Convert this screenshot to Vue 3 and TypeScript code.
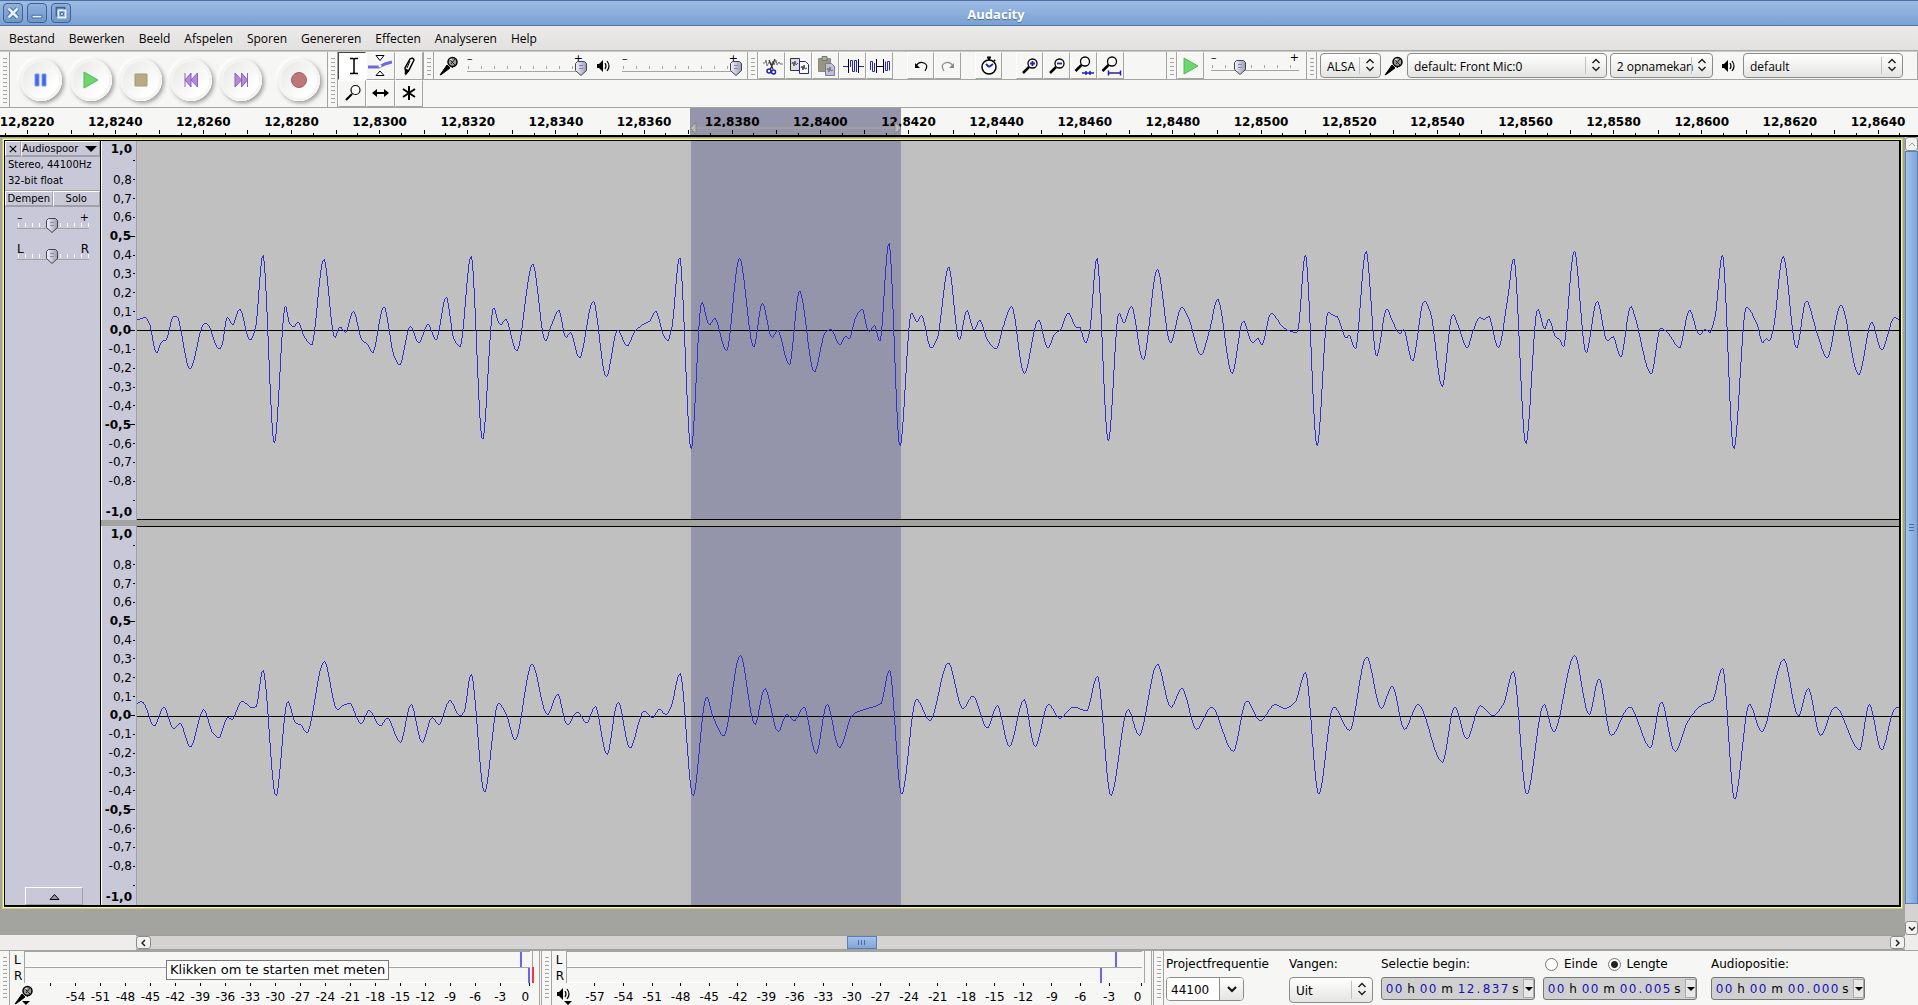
<script setup lang="ts">
import { ref } from 'vue'

interface Section { from: number; sx: number; sy: number; zero: number; points: string }
interface Point { x: number; y: number }

const menus = ['Bestand', 'Bewerken', 'Beeld', 'Afspelen', 'Sporen', 'Genereren', 'Effecten', 'Analyseren', 'Help']
const transport = [
  { id: 'pause', label: 'Pauze' },
  { id: 'play', label: 'Afspelen' },
  { id: 'stop', label: 'Stop' },
  { id: 'prev', label: 'Naar begin' },
  { id: 'next', label: 'Naar einde' },
  { id: 'record', label: 'Opnemen' },
]
const tools = [
  { id: 'ibeam', label: 'Selecteren' },
  { id: 'envelope', label: 'Omhullende' },
  { id: 'pencil', label: 'Tekenen' },
  { id: 'zoomtool', label: 'Zoomen' },
  { id: 'shift', label: 'Tijdverschuiving' },
  { id: 'multi', label: 'Multitool' },
]
const editGroups = [
  [{ id: 'cut', label: 'Knippen' }, { id: 'copy', label: 'Kopiëren' }, { id: 'paste', label: 'Plakken' }, { id: 'trim', label: 'Bijsnijden' }, { id: 'silence', label: 'Stilte' }],
  [{ id: 'undo', label: 'Ongedaan maken' }, { id: 'redo', label: 'Opnieuw' }],
  [{ id: 'timer', label: 'Synchronisatie' }],
  [{ id: 'zoomin', label: 'Inzoomen' }, { id: 'zoomout', label: 'Uitzoomen' }, { id: 'fitsel', label: 'Selectie passend' }, { id: 'fitproj', label: 'Project passend' }],
]

const times = Array.from({ length: 22 }, (_, i) => '12,8' + String(220 + i * 20))
const levels = Array.from({ length: 17 }, (_, i) => {
  const v = 8 - i
  return { text: (v < 0 ? '-' : '') + '0,' + Math.abs(v), bold: v % 5 === 0 }
})
const recordMarks = ['', ...Array.from({ length: 19 }, (_, i) => String(-54 + i * 3))]
const playMarks = Array.from({ length: 20 }, (_, i) => String(-57 + i * 3))

const timecodes = {
  begin: '00h00m12.837s',
  length: '00h00m00.005s',
  position: '00h00m00.000s',
}
function glyphClass(c: string): string {
  return c === '.' ? 'dot' : /[a-z]/.test(c) ? 'unit ' + c : ''
}
const mode = ref('lengte')
const rate = ref('44100')

const left: Section[] = [
  { from: 130, sx: 2.6133, sy: 3, zero: 301, points: '19,268 38,262 50,280 69,368 82,335 94,328 114,258 122,260 156,416 194,280 202,283 232,356 240,345 254,262 267,284 286,237 313,329 328,290 347,76 377,637 406,229 417,282 428,290 438,276 456,322 474,344 506,88 535,322 548,291 562,307 583,244 606,330 620,343 633,368 663,231 690,378 704,404 732,289 754,338 778,283 799,329 826,202 847,330 862,349 891,79 921,628 950,233 960,268 967,284 981,268 1010,362 1052,103 1085,332 1100,288 1120,241 1139,322 1150,307 1174,383 1210,213 1244,440 1274,300 1298,347 1320,302 1345,279 1356,274 1373,244 1395,318 1404,332 1416,290 1436,83 1466,656 1494,217 1513,284 1527,265' },
  { from: 680, sx: 2.529, sy: 3, zero: 301, points: '117,362 150,85 186,349 208,220 232,322 246,301 276,404 302,184 339,425 368,305 381,298 404,344 417,319 427,325 445,258 460,237 477,304 491,286 505,332 528,40 556,647 585,249 598,274 610,256 634,352 650,325 679,112 706,329 725,241 743,299 757,271 779,334 799,356 817,290 838,229 870,429 906,270 930,353 948,310 962,298 981,249 1002,291 1011,293 1025,338 1036,300 1054,85 1083,632 1110,249 1122,277 1141,229 1171,389 1207,118 1240,337 1268,232 1286,265 1317,374 1340,295 1359,208 1396,429 1424,273 1447,338 1461,325 1471,344 1494,250 1508,265 1523,291 1545,304 1557,307' },
  { from: 1280, sx: 2.4577, sy: 3, zero: 301, points: '44,297 62,76 91,647 118,247 130,256 140,260 162,323 169,316 185,356 211,64 237,377 262,237 275,270 293,310 303,299 325,392 354,213 370,250 398,468 424,253 440,295 459,353 475,300 490,262 500,268 512,259 536,352 560,200 574,85 604,640 633,238 650,295 660,268 678,322 687,328 696,350 723,64 752,367 779,213 804,331 818,320 837,380 862,229 872,260 912,431 935,295 955,313 981,353 1006,241 1030,314 1044,298 1055,307 1069,260 1087,76 1115,656 1146,232 1172,283 1186,337 1193,326 1202,332 1213,290 1236,79 1269,353 1293,213 1320,310 1344,383 1378,225 1422,433 1454,277 1478,359 1510,262 1521,268' },
]
const right: Section[] = [
  { from: 130, sx: 2.6133, sy: 3, zero: 256, points: '19,216 28,211 36,218 62,284 88,229 113,292 130,277 157,347 192,236 217,308 231,320 255,259 265,265 292,211 318,229 329,226 347,118 381,494 412,211 432,276 445,281 461,305 507,91 541,235 556,223 573,217 603,278 624,238 653,283 672,262 706,334 734,220 763,334 789,259 806,281 835,209 862,254 873,240 891,130 926,482 962,217 984,254 1006,326 1050,100 1090,250 1117,190 1142,281 1168,243 1193,275 1215,226 1246,370 1275,213 1306,350 1343,240 1365,259 1382,235 1399,250 1414,225 1437,127 1471,494 1506,199 1524,259 1551,314' },
  { from: 0, sx: 0.8175, sy: 0.8175, zero: 584.7, points: '605,535 617,591 625,562 636,597 643,583 649,588 657,577 667,615 676,575 686,610 697,583 706,579 720,574 727,547 737,648 749,571 760,588 775,541 787,578 795,568 807,594 815,576 825,609 837,571 846,609 857,575 866,586 877,577 888,580 897,552 908,649 922,579 931,600 946,542 957,577 966,562 978,595 990,577 1008,613 1019,572 1030,588 1042,575 1050,578 1059,572 1067,549 1078,648 1090,577 1103,596 1117,536 1129,578 1138,560 1148,595 1159,575 1179,622 1189,577 1199,603 1210,576 1220,584 1229,574 1237,548 1248,648 1262,575 1270,597 1287,535 1299,583 1307,554 1317,600 1332,577 1349,610 1358,573 1369,613 1380,588 1390,576 1400,571 1408,545 1418,652 1430,575 1440,597 1458,538 1470,584 1478,562 1488,600 1500,577 1520,612 1528,575 1538,612 1549,578 1552,577' },
]

// Monotone cubic through the samples, drawn as one vertical run per column
// so that steep flanks stay unbroken.
function trace(sections: Section[]): string {
  const p: Point[] = sections.flatMap(s =>
    s.points.split(' ').map(pair => {
      const [x, y] = pair.split(',').map(Number)
      return { x: s.from + x / s.sx - 137, y: 189 + (y - s.zero) / s.sy }
    }),
  )
  const slope = p.slice(1).map((b, i) => (b.y - p[i].y) / (b.x - p[i].x))
  const tangent = p.map((_, i) => {
    const a = slope[i - 1]
    const b = slope[i]
    if (a === undefined || b === undefined || a * b <= 0) return 0
    return (2 * a * b) / (a + b)
  })
  let k = 0
  const at = (x: number): number => {
    while (k < p.length - 2 && p[k + 1].x < x) k++
    const h = p[k + 1].x - p[k].x
    const t = Math.min(1, Math.max(0, (x - p[k].x) / h))
    const t2 = t * t
    const t3 = t2 * t
    return Math.round(
      (2 * t3 - 3 * t2 + 1) * p[k].y + (t3 - 2 * t2 + t) * h * tangent[k] +
      (3 * t2 - 2 * t3) * p[k + 1].y + (t3 - t2) * h * tangent[k + 1],
    )
  }
  let d = ''
  let prev = at(0)
  for (let x = 0; x < 1762; x++) {
    const next = at(x + 1)
    if (next > prev) d += `M${x}.5 ${prev}V${next}`
    else if (next < prev) d += `M${x}.5 ${next + 1}V${prev + 1}`
    else d += `M${x}.5 ${prev}v1`
    prev = next
  }
  return d
}
const channels = [trace(left), trace(right)]
</script>

<template>
  <div class="window">
    <svg class="defs" aria-hidden="true">
      <defs>
        <linearGradient id="thumb-fill" x1="0" x2="1"><stop offset="0" stop-color="#f4f4fc" /><stop offset="1" stop-color="#9a9ab8" /></linearGradient>
        <symbol id="mic" viewBox="0 0 20 20">
          <path d="M1 19L8 9l3 3L3 18z" fill="#000" stroke="#000" /><circle cx="13.500" cy="6" r="4.500" fill="#999" stroke="#000" stroke-width="1.500" /><path d="M9 8l5 4M11 4l5 5M12 8l4-5" stroke="#222" fill="none" /><path d="M11 4l2-1" stroke="#fff" />
        </symbol>
        <symbol id="speaker" viewBox="0 0 16 16">
          <path d="M1 6h2l4-4v12L3 10H1z" fill="#000" /><path d="M9 5q2 3 0 6M11 3q4 5 0 10" stroke="#000" stroke-width="1.200" fill="none" />
        </symbol>
        <symbol id="thumb" viewBox="0 0 12 15">
          <path d="M2.500.5h7l2 2v7L6 14.500.5 9.500v-7z" fill="url(#thumb-fill)" stroke="#444" /><path d="M4 4.500h4M4 7.500h4" stroke="#8888a8" />
        </symbol>
        <symbol id="updown" viewBox="0 0 10 14"><path d="M1.500 5L5 1.500 8.500 5M1.500 9L5 12.500 8.500 9" fill="none" stroke="#222" stroke-width="1.500" /></symbol>
        <symbol id="pause" viewBox="0 0 24 24"><path d="M6 6h4v12H6zM13 6h4v12h-4z" fill="#3f66e8" stroke="#7f9cf4" /></symbol>
        <symbol id="play" viewBox="0 0 24 24"><path d="M5 4v16l14-8z" fill="#6dd66d" stroke="#58b858" /></symbol>
        <symbol id="stop" viewBox="0 0 24 24"><path d="M6 6h12v12H6z" fill="#b9a985" stroke="#a79a78" /></symbol>
        <symbol id="prev" viewBox="0 0 24 24"><path d="M6 5v14M12 5v14l-6-7zM18.500 5v14L12 12z" fill="#b48ae0" stroke="#8a63b4" /></symbol>
        <symbol id="next" viewBox="0 0 24 24"><path d="M18.500 5v14M12.500 5v14l6-7zM6 5v14l6.500-7z" fill="#b48ae0" stroke="#8a63b4" /></symbol>
        <symbol id="record" viewBox="0 0 24 24"><circle cx="12" cy="12" r="7.500" fill="#bd7878" stroke="#a06060" /></symbol>
        <symbol id="ibeam" viewBox="0 0 24 24"><path d="M10 4.500h3l1 1 1-1h3M10 19.500h3l1-1 1 1h3M14 5v14" stroke="#000" stroke-width="1.500" fill="none" /></symbol>
        <symbol id="envelope" viewBox="0 0 24 24"><path d="M0 13h11l6-3 7-2" stroke="#6a6ae0" stroke-width="3" fill="none" /><path d="M8 1.500h8L12 6.500zM8 21.500h8L12 17z" fill="#fff" stroke="#000" /><circle cx="12" cy="12" r="1.500" fill="#fff" /></symbol>
        <symbol id="pencil" viewBox="0 0 24 24"><path d="M9 20l-1-6 5-9q3-2 4 1l-5 10z" fill="#fff" stroke="#000" stroke-width="1.500" /><path d="M8 20l1-5 3 2zM13 7l-3 7" fill="#000" stroke="#000" /></symbol>
        <symbol id="zoomtool" viewBox="0 0 24 24"><circle cx="15.500" cy="9" r="4.500" fill="#fff" stroke="#000" stroke-width="1.200" /><path d="M12 13l-6 6" stroke="#000" stroke-width="2.200" /></symbol>
        <symbol id="shift" viewBox="0 0 24 24"><path d="M5 12h15" stroke="#000" stroke-width="2" /><path d="M9 8l-5 4 5 4zM16 8l5 4-5 4z" /></symbol>
        <symbol id="multi" viewBox="0 0 24 24"><path d="M12 5v14M6 8l12 8M18 8L6 16" stroke="#000" stroke-width="2" /></symbol>
        <symbol id="cut" viewBox="0 0 24 24"><path d="M3 9h2l1-3 1 6 2-4 2 3 2-4 1 4 2-5 1 5 2-3 1 2h3" stroke="#777" fill="none" /><path d="M15 5l-5 11M9 6l4 9" stroke="#333" stroke-width="1.300" /><circle cx="9" cy="17" r="2" fill="none" stroke="#22a" stroke-width="1.500" /><circle cx="13.500" cy="18" r="2" fill="none" stroke="#22a" stroke-width="1.500" /></symbol>
        <symbol id="copy" viewBox="0 0 24 24"><path d="M3.500 4.500h9v12h-9z" fill="#ddd" stroke="#333" /><path d="M5 10l1-2 1 4 1-5 1 4 2-2" stroke="#555" fill="none" /><path d="M12.500 7.500h6l3 3v9h-9z" fill="#fff" stroke="#22a" /><path d="M14 14l1-2 1 4 1-5 1 4 2-1" stroke="#444" fill="none" /></symbol>
        <symbol id="paste" viewBox="0 0 24 24"><path d="M4.500 4.500h12v13h-12z" fill="#9c9678" stroke="#888" /><path d="M8 2.500h5v4H8z" fill="#aaa" stroke="#777" /><path d="M11.500 9.500h6l3 3v9h-9z" fill="#c0c0d4" stroke="#77a" /><path d="M13 16l1-2 1 4 1-5 1 4 2-1" stroke="#777" fill="none" /></symbol>
        <symbol id="trim" viewBox="0 0 24 24"><path d="M2 12.500h5M18 12.500h5" stroke="#22c" /><path d="M7.500 5v14M17.500 5v14" stroke="#000" /><path d="M9.500 13V6.500M9.500 6.500h2v11h2v-11h2V18" stroke="#22c" fill="none" /></symbol>
        <symbol id="silence" viewBox="0 0 24 24"><path d="M2.500 16V7.500h2v10h2V9M17.500 7.500v9h2v-9h2v9" stroke="#22c" fill="none" /><path d="M8.500 5v14M15.500 5v14M8 12.500h8" stroke="#000" /></symbol>
        <symbol id="undo" viewBox="0 0 24 24"><path d="M7 12q3-5 8-3t1 8" fill="none" stroke="#000" stroke-width="1.200" /><path d="M6 9v5h5z" /></symbol>
        <symbol id="redo" viewBox="0 0 24 24"><path d="M17 12q-3-5-8-3t-1 8" fill="none" stroke="#888" stroke-width="1.200" /><path d="M18 9v5h-5z" fill="#888" /></symbol>
        <symbol id="timer" viewBox="0 0 24 24"><circle cx="12" cy="13" r="7" fill="#fff" stroke="#000" stroke-width="1.500" /><path d="M10 3.500h4M12 3v3M17 6l1 1" stroke="#000" stroke-width="2" /><path d="M12 13L9 10M12 13l4-3" stroke="#22a" stroke-width="1.800" /></symbol>
        <symbol id="zoomin" viewBox="0 0 24 24"><circle cx="14.500" cy="9.500" r="4.500" fill="#fff" stroke="#000" stroke-width="1.300" /><path d="M11 13l-6 6" stroke="#000" stroke-width="2.500" /><path d="M12 9.500h5M14.500 7v5" stroke="#22a" stroke-width="1.800" /></symbol>
        <symbol id="zoomout" viewBox="0 0 24 24"><circle cx="14.500" cy="9.500" r="4.500" fill="#fff" stroke="#000" stroke-width="1.300" /><path d="M11 13l-6 6" stroke="#000" stroke-width="2.500" /><path d="M12 9.500h5" stroke="#22a" stroke-width="1.800" /></symbol>
        <symbol id="fitsel" viewBox="0 0 24 24"><circle cx="13" cy="7.500" r="4.500" fill="#fff" stroke="#000" stroke-width="1.300" /><path d="M9.500 11l-6 6" stroke="#000" stroke-width="2.500" /><path d="M10 19h12M14 17v4M18 17v4" stroke="#22a" stroke-width="1.500" /></symbol>
        <symbol id="fitproj" viewBox="0 0 24 24"><circle cx="13" cy="7.500" r="4.500" fill="#fff" stroke="#000" stroke-width="1.300" /><path d="M9.500 11l-6 6" stroke="#000" stroke-width="2.500" /><path d="M9.500 19h12M9.500 16.500v5M21.500 16.500v5" stroke="#22a" stroke-width="1.500" /></symbol>
      </defs>
    </svg>

    <header class="titlebar">
      <div class="winbuttons">
        <button aria-label="Sluiten"><svg viewBox="0 0 20 20"><path d="M5 5l10 10M15 5L5 15" stroke="#3f6291" stroke-width="5" /><path d="M5 5l10 10M15 5L5 15" stroke="#e8f0fa" stroke-width="3" /></svg></button>
        <button aria-label="Minimaliseren"><svg viewBox="0 0 20 20"><path d="M4.500 12.500h11v3h-11z" fill="#e8f0fa" stroke="#3f6291" /></svg></button>
        <button aria-label="Maximaliseren"><svg viewBox="0 0 20 20"><path d="M5 4h9v9H5z" fill="none" stroke="#3f6291" stroke-width="2" /><path d="M7 7h8v8H7z" fill="#6f97cb" stroke="#e8f0fa" stroke-width="2" /><path d="M9.500 9.500h3v3h-3z" fill="#e8f0fa" stroke="#3f6291" /></svg></button>
      </div>
      <h1>Audacity</h1>
    </header>

    <nav class="menubar">
      <a v-for="m in menus" :key="m" href="#">{{ m }}</a>
    </nav>

    <section class="toolbars">
      <div class="grip"></div>
      <div class="transport">
        <button v-for="t in transport" :key="t.id" :class="t.id" :aria-label="t.label"><svg><use :href="'#' + t.id" /></svg></button>
      </div>
      <div class="grip"></div>
      <div class="tools">
        <button v-for="t in tools" :key="t.id" class="flat" :class="t.id" :aria-label="t.label"><svg><use :href="'#' + t.id" /></svg></button>
      </div>
      <div class="strip">
        <div class="grip"></div>
        <div class="mixer">
          <svg class="mic"><use href="#mic" /></svg>
          <label class="slider wide">
            <span class="sign"><i>–</i><i>+</i></span><span class="ticks"></span><svg class="knob end"><use href="#thumb" /></svg>
            <input type="range" value="100" aria-label="Opnamevolume" />
          </label>
          <svg class="speaker"><use href="#speaker" /></svg>
          <label class="slider wide">
            <span class="sign"><i>–</i><i>+</i></span><span class="ticks"></span><svg class="knob end"><use href="#thumb" /></svg>
            <input type="range" value="100" aria-label="Afspeelvolume" />
          </label>
        </div>
        <div class="grip"></div>
        <div class="edit">
          <div v-for="(g, i) in editGroups" :key="i" class="group">
            <button v-for="b in g" :key="b.id" class="flat" :aria-label="b.label"><svg><use :href="'#' + b.id" /></svg></button>
          </div>
        </div>
        <div class="grip"></div>
        <div class="speed">
          <button class="flat" aria-label="Afspelen op snelheid"><svg><use href="#play" /></svg></button>
          <label class="slider rate">
            <span class="sign"><i>–</i><i>+</i></span><span class="ticks"></span><svg class="knob"><use href="#thumb" /></svg>
            <input type="range" value="33" aria-label="Afspeelsnelheid" />
          </label>
        </div>
        <div class="grip"></div>
        <div class="devices">
          <span class="select host"><select aria-label="Host"><option>ALSA</option></select><svg><use href="#updown" /></svg></span>
          <svg class="mic"><use href="#mic" /></svg>
          <span class="select indev"><select aria-label="Opnameapparaat"><option>default: Front Mic:0</option></select><svg><use href="#updown" /></svg></span>
          <span class="select chans"><select aria-label="Kanalen"><option>2 opnamekanalen</option></select><svg><use href="#updown" /></svg></span>
          <svg class="speaker"><use href="#speaker" /></svg>
          <span class="select outdev"><select aria-label="Afspeelapparaat"><option>default</option></select><svg><use href="#updown" /></svg></span>
        </div>
      </div>
    </section>

    <section class="timeline">
      <div class="range"></div>
      <div class="marks">
        <div v-for="t in times" :key="t" class="mark"><span>{{ t }}</span><i></i></div>
      </div>
      <svg class="arrow" viewBox="0 0 210 12" preserveAspectRatio="none"><path d="M5 6h200" stroke="#a0a09c" stroke-width="2" /><path d="M6 0v12L0 6zM204 0v12l6-6z" fill="#b8b8b4" stroke="#888" /></svg>
    </section>

    <main class="workspace">
      <div class="trackframe">
        <div class="track">
          <aside class="panel">
            <div class="head"><button class="close" aria-label="Spoor sluiten"><svg viewBox="0 0 10 10"><path d="M1 1l8 8M9 1L1 9" stroke="#000" stroke-width="1.500" /></svg></button><button class="name">Audiospoor<svg viewBox="0 0 12 6"><path d="M0 0h12L6 6z" /></svg></button></div>
            <p>Stereo, 44100Hz<br />32-bit float</p>
            <div class="head half"><button>Dempen</button><button>Solo</button></div>
            <label class="slider small"><span class="sign"><i>–</i><i>+</i></span><span class="ticks"></span><svg class="knob mid"><use href="#thumb" /></svg><input type="range" aria-label="Versterking" /></label>
            <label class="slider small pan"><span class="sign"><i>L</i><i>R</i></span><span class="ticks"></span><svg class="knob mid"><use href="#thumb" /></svg><input type="range" aria-label="Balans" /></label>
            <button class="collapse" aria-label="Inklappen"><svg viewBox="0 0 11 7"><path d="M1 6.500l4.500-5 4.500 5z" fill="#9898b0" stroke="#000" /></svg></button>
          </aside>
          <div class="channels">
            <div v-for="(d, i) in channels" :key="i" class="channel">
              <div class="vruler">
                <div class="top">1,0</div>
                <div v-for="l in levels" :key="l.text" :class="{ strong: l.bold }">{{ l.text }}</div>
                <div class="bottom">-1,0</div>
              </div>
              <div class="wave">
                <div class="selected"></div>
                <svg viewBox="0 0 1762 378" preserveAspectRatio="none">
                  <path d="M0 189.500H1762" stroke="#000" />
                  <path :d="d" stroke="#3232c8" fill="none" />
                </svg>
              </div>
            </div>
          </div>
        </div>
      </div>
      <div class="vscroll">
        <button aria-label="Omhoog"><svg viewBox="0 0 8 5"><path d="M1 4l3-3 3 3" stroke="#999" fill="none" /></svg></button>
        <div class="thumb"><i></i><i></i><i></i></div>
        <div class="rest"></div>
        <button aria-label="Omlaag"><svg viewBox="0 0 8 5"><path d="M1 1l3 3 3-3" stroke="#222" stroke-width="1.500" fill="none" /></svg></button>
      </div>
    </main>

    <div class="hscroll">
      <div class="bar">
        <button aria-label="Naar links"><svg viewBox="0 0 5 8"><path d="M4 1L1 4l3 3" stroke="#222" stroke-width="1.500" fill="none" /></svg></button>
        <div class="lane"><div class="thumb"><i></i><i></i><i></i></div></div>
        <button aria-label="Naar rechts"><svg viewBox="0 0 5 8"><path d="M1 1l3 3-3 3" stroke="#222" stroke-width="1.500" fill="none" /></svg></button>
      </div>
    </div>

    <footer class="bottom-bars">
      <div class="grip"></div>
      <div class="meter record">
        <div class="lr"><span>L</span><span>R</span><svg class="mic"><use href="#mic" /></svg><i class="drop"></i></div>
        <div class="scale">
          <div class="vu"><i class="peak a"></i></div>
          <div class="vu"><i class="peak b"></i></div>
          <div class="db"><span v-for="(m, i) in recordMarks" :key="i">{{ m }}</span></div>
        </div>
        <div class="clip"><i></i><i class="red"></i></div>
        <div class="tooltip" role="tooltip">Klikken om te starten met meten</div>
      </div>
      <div class="grip"></div>
      <div class="meter playback">
        <div class="lr"><span>L</span><span>R</span><svg class="speaker"><use href="#speaker" /></svg><i class="drop"></i></div>
        <div class="scale">
          <div class="vu"><i class="peak c"></i></div>
          <div class="vu"><i class="peak d"></i></div>
          <div class="db"><span v-for="m in playMarks" :key="m">{{ m }}</span></div>
        </div>
        <div class="clip"><i></i><i></i></div>
      </div>
      <div class="grip"></div>
      <div class="selection">
        <div class="field freq">
          <label for="rate">Projectfrequentie</label>
          <div class="combo"><input id="rate" v-model="rate" /><button aria-label="Frequentie kiezen"><svg viewBox="0 0 10 7"><path d="M1 1l4 4 4-4" stroke="#111" stroke-width="2" fill="none" /></svg></button></div>
        </div>
        <div class="field snap">
          <label for="snap">Vangen:</label>
          <span class="select"><select id="snap"><option>Uit</option></select><svg><use href="#updown" /></svg></span>
        </div>
        <div class="field begin">
          <span>Selectie begin:</span>
          <div class="timecode"><b v-for="(c, i) in timecodes.begin" :key="i" :class="glyphClass(c)">{{ c }}</b><button aria-label="Notatie"><i class="drop"></i></button></div>
        </div>
        <div class="field len">
          <div class="radios">
            <label><input v-model="mode" type="radio" name="mode" value="einde" />Einde</label>
            <label><input v-model="mode" type="radio" name="mode" value="lengte" />Lengte</label>
          </div>
          <div class="timecode"><b v-for="(c, i) in timecodes.length" :key="i" :class="glyphClass(c)">{{ c }}</b><button aria-label="Notatie"><i class="drop"></i></button></div>
        </div>
        <div class="field pos">
          <span>Audiopositie:</span>
          <div class="timecode"><b v-for="(c, i) in timecodes.position" :key="i" :class="glyphClass(c)">{{ c }}</b><button aria-label="Notatie"><i class="drop"></i></button></div>
        </div>
      </div>
    </footer>
  </div>
</template>

<style>
body { margin: 0; background: #f6f6f4; }
</style>

<style scoped>
* { box-sizing: border-box; }
.window { height: 100vh; display: flex; flex-direction: column; overflow: hidden; font: 12px "Open Sans", sans-serif; color: #000; background: #f6f6f4; }
.defs { position: absolute; width: 0; height: 0; }
button { appearance: none; margin: 0; padding: 0; border: 0; background: none; font: inherit; color: inherit; display: flex; align-items: center; justify-content: center; }
i { font-style: normal; }

.titlebar { flex: none; position: relative; height: 26px; display: flex; align-items: center; justify-content: center; background: linear-gradient(#9dbce6, #7aa1d2); border-top: 1px solid #4c6f9d; border-bottom: 1px solid #5178ac; }
.titlebar h1 { flex: 1; margin: 0; padding-left: 74px; padding-top: 2px; text-align: center; font-size: 13px; font-weight: 700; color: #fff; text-shadow: 0 1px 1px #4a6d9c; }
.winbuttons { position: absolute; left: 3px; top: 2px; display: flex; gap: 4px; }
.winbuttons button { width: 20px; height: 20px; border: 1px solid #3f6291; border-radius: 4px; background: linear-gradient(#8fb1de, #6f97cb); }
.winbuttons svg { width: 18px; height: 18px; }

.menubar { flex: none; height: 25px; display: flex; gap: 14px; padding: 1px 9px 0; align-items: center; background: linear-gradient(#ebeae8, #e2e1df); border-bottom: 1px solid #a8a7a4; }
.menubar a { color: #000; text-decoration: none; }

.toolbars { flex: none; display: flex; height: 57px; border-top: 1px solid #c8c8c4; border-bottom: 1px solid #a4a4a0; }
.grip { flex: none; width: 10px; border-right: 1px solid #a4a4a0; background: repeating-linear-gradient(#a4a4a0 0 1px, transparent 1px 4px) 3px 6px / 4px calc(100% - 10px) no-repeat; }
.transport { flex: none; width: 318px; display: flex; align-items: center; padding-left: 6px; border-right: 1px solid #a4a4a0; }
.transport button { width: 42px; height: 42px; margin: 0 4px; border-radius: 50%; background: linear-gradient(135deg, #e4e4e2, #fff 75%); box-shadow: 2px 2px 4px #999, -2px -2px 3px #fff, inset 0 0 0 3px #f4f4f2; }
.transport .record { margin-left: 12px; }
.transport svg { width: 24px; height: 24px; }
.tools { flex: none; width: 85px; display: grid; grid-template: repeat(2, 1fr) / repeat(3, 1fr); }
.flat { border: 1px solid #fff; border-right-color: #a4a4a0; border-bottom-color: #a4a4a0; }
.flat svg { width: 24px; height: 24px; }
.flat.ibeam { border: 1px solid #fff; border-top-color: #444; border-left-color: #444; background: #fff; }
.strip { flex: 1; display: flex; height: 28px; border-left: 1px solid #a4a4a0; border-bottom: 1px solid #a4a4a0; }
.mixer { flex: none; width: 314px; display: flex; align-items: center; padding-left: 5px; border-right: 1px solid #a4a4a0; }
.mic { flex: none; width: 20px; height: 20px; }
.speaker { flex: none; width: 16px; height: 16px; }

.slider { position: relative; flex: none; display: block; height: 26px; }
.slider input { position: absolute; inset: 0; width: 100%; height: 100%; margin: 0; opacity: 0; }
.slider .sign { display: flex; justify-content: space-between; font: 11px/12px "DejaVu Sans", sans-serif; }
.slider .ticks { display: block; height: 6px; margin-top: 1px; border-bottom: 1px solid #a4a4a0; background: repeating-linear-gradient(90deg, #a4a4a0 0 1px, transparent 1px 13px) 1px 0 / 100% 3px no-repeat; }
.knob { position: absolute; top: 8px; width: 12px; height: 15px; left: 23px; }
.knob.end { left: auto; right: -4px; }
.wide { width: 116px; margin: 0 9px 0 8px; }
.wide + .speaker { margin-left: 4px; margin-right: 0; }
.mixer .speaker + .wide { margin-left: 10px; }
.rate { width: 88px; margin-left: 7px; }

.edit { flex: none; width: 409px; display: flex; gap: 14px; border-right: 1px solid #a4a4a0; }
.edit .group { display: flex; }
.edit .flat { width: 27px; }
.speed { flex: none; width: 130px; display: flex; border-right: 1px solid #a4a4a0; }
.speed .flat { width: 27px; }

.devices { flex: 1; display: flex; align-items: center; gap: 3px; padding-left: 3px; padding-right: 14px; border-right: 1px solid #a4a4a0; }
.select { position: relative; display: block; height: 25px; }
.select select { appearance: none; width: 100%; height: 100%; padding: 2px 18px 0 6px; font: inherit; color: #000; border: 1px solid #8c8c88; border-radius: 4px; background: linear-gradient(#fff, #e4e4e2); overflow: hidden; }
.select svg { position: absolute; right: 6px; top: 5px; width: 10px; height: 14px; pointer-events: none; }
.select::after { content: ""; position: absolute; right: 21px; top: 4px; bottom: 4px; width: 1px; background: #c0c0bc; }
.host { width: 61px; }
.indev { flex: 201; }
.chans { flex: 104; }
.outdev { flex: 161; }
.devices .speaker { margin: 0 3px 0 5px; }

.timeline { flex: none; position: relative; height: 29px; overflow: hidden; border-bottom: 2px solid #000; }
.timeline .range { position: absolute; left: 36%; width: 11%; top: 0; bottom: 0; background: #9494aa; }
.marks { position: relative; display: flex; height: 27px; margin: 0 -4px 0 -17px; }
.mark { flex: 1; text-align: center; font: bold 12px/14px "DejaVu Sans", sans-serif; padding-top: 7px; position: relative; }
.mark i { position: absolute; left: 0; right: 0; bottom: 0; height: 5px; background: linear-gradient(#000, #000) 0 0 / 1px 4px no-repeat, linear-gradient(#000, #000) 50% 0 / 1px 4px no-repeat, linear-gradient(#000, #000) 25% 3px / 1px 2px no-repeat, linear-gradient(#000, #000) 75% 3px / 1px 2px no-repeat; }
.arrow { position: absolute; left: 36%; width: 11%; bottom: 1px; height: 12px; }

.workspace { flex: 1; min-height: 0; display: flex; background: #a3a3a0; }
.trackframe { flex: 1; display: flex; margin: 1px 2px 26px 2px; border: 2px solid #ffff82; outline: 1px solid #c8c88a; outline-offset: -1px; }
.track { flex: 1; display: flex; border: solid #000; border-width: 1px 2px 2px 1px; background: #c8c8d8; }
.panel { flex: none; width: 96px; display: flex; flex-direction: column; border-right: 1px solid #000; font: 10px/15px "DejaVu Sans", sans-serif; }
.head { display: flex; height: 16px; }
.head button { flex: 1; border: 1px solid #fff; border-right-color: #a0a0a8; border-bottom: 2px solid #a0a0a8; }
.head .close { flex: none; width: 16px; }
.head .close svg { width: 8px; height: 8px; }
.head .name { gap: 7px; padding-right: 2px; }
.head .name svg { width: 12px; height: 6px; }
.panel p { margin: 0; height: 33px; padding: 0 3px 1px; line-height: 16px; white-space: nowrap; }
.half { border-top: 1px solid #a0a0a8; height: 17px; }
.small { width: 72px; margin: 5px auto 0 12px; }
.small .ticks { background: repeating-linear-gradient(90deg, #fff 0 1px, transparent 1px 7px) 1px 0 / 100% 4px no-repeat; margin-top: -1px; }
.small .sign { height: 12px; }
.small.pan .sign { font-size: 12px; }
.knob.mid { left: 29px; top: 6px; }
.collapse { margin: auto 0 0 20px; width: 58px; height: 18px; border: 1px solid #fff; border-right-color: #a0a0a8; border-bottom-color: #a0a0a8; }
.collapse svg { width: 11px; height: 7px; }

.channels { flex: 1; display: flex; flex-direction: column; gap: 6px; background: #a3a3a0; }
.channel { flex: 1; display: flex; position: relative; }
.channel:first-child .wave { border-bottom: 1px solid #000; }
.channel:last-child .wave { border-top: 1px solid #000; }
.vruler { flex: none; width: 36px; display: grid; grid-template-rows: minmax(0, 155fr) repeat(17, minmax(0, 100fr)) minmax(0, 155fr); background: #c8c8d8; border-left: 1px solid #fff; border-right: 1px solid #a0a0a8; font: 12px/14px "DejaVu Sans", sans-serif; }
.vruler div { display: flex; align-items: center; justify-content: flex-end; gap: 1px; padding-right: 1px; }
.vruler div::after { content: ""; width: 2px; height: 1px; background: #000; }
.vruler .strong, .vruler .top, .vruler .bottom { font-weight: 700; }
.vruler .strong::after { width: 5px; margin-left: -2px; }
.vruler .top { align-items: flex-start; padding-top: 1px; }
.vruler .bottom { align-items: flex-end; padding-bottom: 1px; }
.vruler .top::after { margin-top: 18px; }
.vruler .bottom::after { margin-bottom: 18px; }
.wave { flex: 1; position: relative; background: #c0c0c0; }
.wave .selected { position: absolute; left: 31.44%; width: 11.92%; top: 0; bottom: 0; background: #9494aa; }
.wave svg { position: absolute; inset: 0; width: 100%; height: 100%; shape-rendering: crispEdges; }
.wave path { vector-effect: non-scaling-stroke; }

.vscroll { flex: none; width: 13px; display: flex; flex-direction: column; background: #d4d3d1; }
.vscroll button, .hscroll button { flex: none; width: 13px; height: 14px; border: 1px solid #8c8c88; border-radius: 3px; background: #f2f2f0; }
.vscroll svg { width: 8px; height: 5px; }
.thumb { display: flex; align-items: center; justify-content: center; gap: 2px; border: 1px solid #5a7fb0; background: linear-gradient(90deg, #a4c3ec, #7fa5d8); }
.vscroll .thumb { flex: 752; flex-direction: column; }
.vscroll .thumb i { width: 5px; height: 1px; background: #4a6d9c; }
.vscroll .rest { flex: 17; }
.hscroll { flex: none; height: 15px; padding: 0 13px 0 136px; background: #eeedeb; }
.bar { display: flex; height: 15px; border: solid #a09f9c; border-width: 1px 0; background: #d4d3d1; }
.hscroll button { width: 15px; height: 13px; }
.hscroll svg { width: 5px; height: 8px; }
.lane { flex: 1; }
.lane .thumb { width: 30px; height: 13px; margin-left: 40%; background: linear-gradient(#a4c3ec, #7fa5d8); }
.lane .thumb i { width: 1px; height: 5px; background: #4a6d9c; }

.bottom-bars { flex: none; height: 55px; display: flex; border-top: 1px solid #a4a4a0; font: 12px "DejaVu Sans", sans-serif; }
.meter { position: relative; display: flex; border-right: 3px double #a4a4a0; }
.record.meter { flex: 531; }
.playback.meter { flex: 602; }
.lr { flex: none; width: 14px; padding: 1px 0 0 4px; display: flex; flex-direction: column; position: relative; line-height: 16px; }
.lr .mic { margin-top: 1px; }
.lr .speaker { margin-top: 2px; }
.drop { display: block; width: 0; height: 0; border: 4px solid transparent; border-top-color: #000; border-bottom: 0; }
.lr .drop { position: absolute; left: 12px; top: 50px; }
.scale { flex: 1; }
.vu { position: relative; height: 16px; border: solid #a4a4a0; border-width: 1px 0 0 1px; box-shadow: inset 0 -1px #fff; }
.peak { position: absolute; top: 0; bottom: 0; width: 2px; background: #6666ff; }
.peak.a { right: 8px; }
.peak.b { right: 0; }
.peak.c { right: 25px; }
.peak.d { right: 40px; }
.db { display: flex; height: 22px; margin-right: -16px; margin-left: 14px; }
.playback .db { margin-right: -18px; margin-left: 15px; }
.db span { flex: 1; display: flex; justify-content: center; padding-top: 7px; line-height: 14px; background: linear-gradient(#000, #000) 50% 0 / 1px 3px no-repeat; }
.db span:last-child { padding-right: 8px; }
.clip { flex: none; width: 7px; padding: 0 2px; margin-right: 2px; }
.clip i { display: block; height: 16px; border-left: 1px solid #a4a4a0; }
.clip .red { background: #f33; border-left: 0; width: 2px; }
.tooltip { position: absolute; left: 156px; top: 9px; padding: 0 3px; height: 20px; line-height: 18px; font-size: 13px; border: 1px solid #777; background: #fff; white-space: nowrap; }

.selection { flex: none; display: flex; padding-right: 53px; padding-left: 2px; font-size: 12px; }
.field { display: flex; flex-direction: column; gap: 4px; padding-top: 4px; }
.field > label, .field > span:first-child, .radios { height: 18px; line-height: 18px; }
.freq { width: 117px; }
.combo { display: flex; width: 78px; height: 24px; border: 1px solid #8c8c88; border-radius: 4px; background: #fff; overflow: hidden; }
.combo input { width: 52px; border: 0; padding: 1px 4px 0; font: inherit; outline: 0; }
.combo button { flex: 1; border-left: 1px solid #8c8c88; background: linear-gradient(#fff, #e4e4e2); }
.combo svg { width: 10px; height: 7px; }
.snap { width: 98px; padding-left: 6px; }
.snap .select { width: 84px; height: 26px; }
.begin, .len { width: 162px; }
.timecode { display: flex; align-items: center; width: 154px; height: 23px; padding-left: 3px; border: 1px solid #777; border-radius: 3px; background: #d0d0d0; }
.timecode b { flex: none; font-weight: 400; width: 9px; text-align: center; color: #1414b4; }
.timecode .unit { width: 16px; color: #000; }
.timecode .m { width: 20px; }
.timecode .s { width: 13px; }
.timecode .dot { width: 7px; }
.timecode button { margin-left: auto; width: 11px; height: 19px; background: #e8e8e8; border: 1px solid #aaa; }
.radios { display: flex; gap: 8px; }
.radios label { display: flex; align-items: center; gap: 6px; padding-left: 2px; }
.radios input { appearance: none; width: 13px; height: 13px; margin: 0; border: 1px solid #777; border-radius: 50%; background: #fff; }
.radios input:checked { background: radial-gradient(#222 0 3px, #fff 4px); }
.pos { padding-left: 6px; }
</style>
